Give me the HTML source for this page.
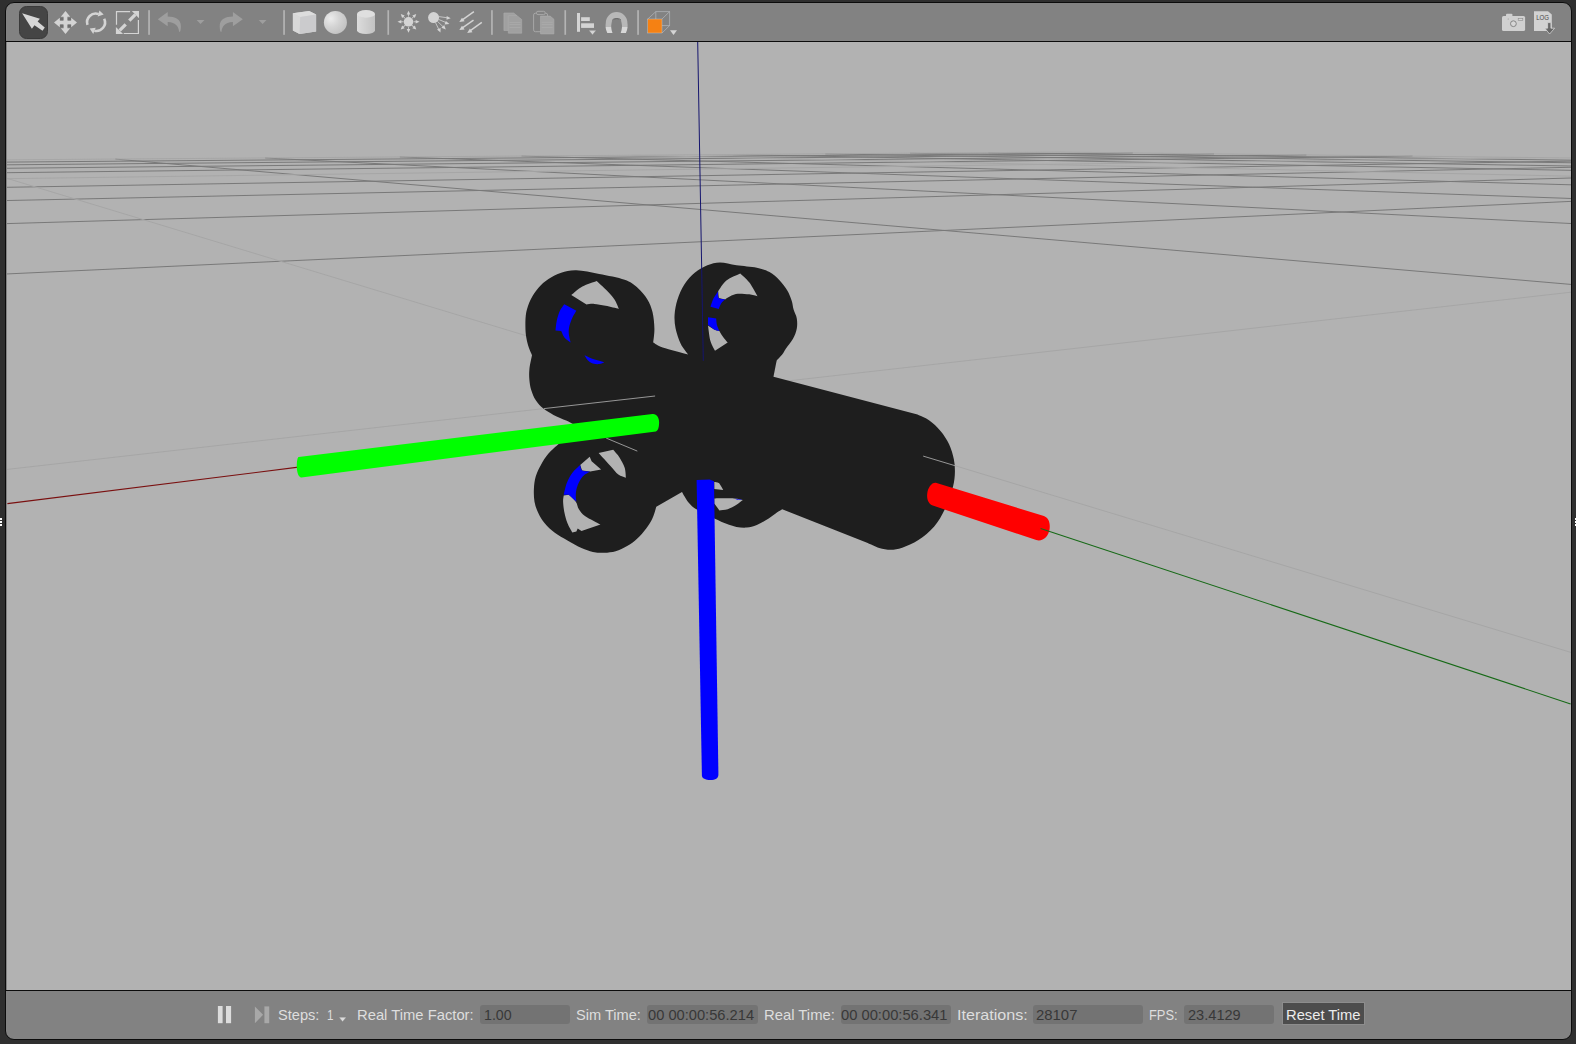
<!DOCTYPE html>
<html lang="en">
<head>
<meta charset="utf-8">
<title>Gazebo</title>
<style>
html,body{margin:0;padding:0;}
body{width:1576px;height:1044px;background:#2f2f2f;position:relative;overflow:hidden;font-family:"Liberation Sans",sans-serif;}
#win{position:absolute;left:5px;top:2px;width:1565px;height:1036px;border:1px solid #0c0c0c;border-radius:9px;background:#828282;overflow:hidden;}
#topline{position:absolute;left:6px;top:41px;width:1565px;height:1px;background:#0c0c0c;}
#botline{position:absolute;left:6px;top:990px;width:1565px;height:1px;background:#0c0c0c;}
#tb{position:absolute;left:0;top:0;}
.lbl{position:absolute;top:1006px;height:18px;line-height:18px;font-size:15px;color:#dedede;white-space:nowrap;}
.fld{position:absolute;top:1005px;height:19px;border-radius:3px;background:#737373;}
.fld span{position:absolute;left:4px;top:1px;line-height:18px;font-size:15px;color:#383838;white-space:nowrap;}
#reset{position:absolute;left:1282.4px;top:1002.2px;width:80.7px;height:20.6px;border:1.9px solid #8d8d8d;background:#4d4d4d;}
#reset span{position:absolute;left:2.7px;top:2.4px;line-height:18px;font-size:15px;color:#ececec;white-space:nowrap;}
.grip{position:absolute;width:2.1px;height:2px;background:#fff;}
/*FIT*/
#l1{transform:scaleX(0.9740);transform-origin:0 0;}
#l2{transform:scaleX(0.7800);transform-origin:0 0;}
#l3{transform:scaleX(0.9855);transform-origin:0 0;}
#l4{transform:scaleX(0.9730);transform-origin:0 0;}
#l5{transform:scaleX(0.9886);transform-origin:0 0;}
#l6{transform:scaleX(1.0730);transform-origin:0 0;}
#l7{transform:scaleX(0.8590);transform-origin:0 0;}
#f1{transform:scaleX(0.9460);transform-origin:0 0;}
#f2{transform:scaleX(0.9780);transform-origin:0 0;}
#f3{transform:scaleX(0.9820);transform-origin:0 0;}
#f4{transform:scaleX(0.9930);transform-origin:0 0;}
#f5{transform:scaleX(0.9720);transform-origin:0 0;}
#rt{transform:scaleX(0.9820);transform-origin:0 0;}
/*ENDFIT*/
</style>
</head>
<body>
<div id="win"></div>

<svg id="scene" width="1564" height="948" viewBox="6.6 42 1564 948" style="position:absolute;left:6.6px;top:42px;background:#b2b2b2">
<g stroke="#797979" stroke-width="1" opacity="1" fill="none"><line x1="1132.4" y1="153.0" x2="-2997.3" y2="186.4"/><line x1="1213.6" y1="153.9" x2="-2999.2" y2="192.0"/><line x1="1306.0" y1="155.0" x2="-2991.7" y2="198.9"/><line x1="1412.1" y1="156.2" x2="-2993.2" y2="207.9"/><line x1="1679.8" y1="159.3" x2="-2998.2" y2="237.6"/><line x1="1852.0" y1="161.3" x2="-2982.4" y2="264.1"/><line x1="2060.4" y1="163.7" x2="-2982.8" y2="310.8"/><line x1="2317.9" y1="166.7" x2="-2983.5" y2="412.7"/><line x1="3071.3" y1="175.4" x2="4984.1" y2="665.0"/><line x1="3654.0" y1="182.1" x2="4999.1" y2="263.0"/><line x1="4496.6" y1="191.9" x2="4997.1" y2="208.9"/><line x1="988.0" y1="152.7" x2="4991.2" y2="203.9"/><line x1="909.7" y1="153.3" x2="4996.8" y2="211.8"/><line x1="824.9" y1="153.9" x2="4986.2" y2="221.5"/><line x1="732.5" y1="154.6" x2="4992.8" y2="234.6"/><line x1="521.1" y1="156.1" x2="4985.1" y2="278.2"/><line x1="399.4" y1="157.0" x2="4997.2" y2="319.8"/><line x1="264.7" y1="158.0" x2="4964.8" y2="393.8"/><line x1="114.9" y1="159.1" x2="4979.4" y2="577.9"/><line x1="-241.9" y1="161.7" x2="-2996.7" y2="710.7"/><line x1="-456.5" y1="163.3" x2="-2990.7" y2="353.3"/><line x1="-702.3" y1="165.1" x2="-2989.3" y2="270.7"/><line x1="-986.7" y1="167.2" x2="-2988.7" y2="234.0"/><line x1="-1713.8" y1="172.5" x2="-2995.5" y2="200.0"/><line x1="-2189.1" y1="176.0" x2="-2994.2" y2="190.7"/><line x1="-2772.8" y1="180.3" x2="-2998.7" y2="183.9"/></g>
<g stroke="#a6a6a6" stroke-width="1" opacity="1" fill="none"><line x1="1060.5" y1="152.1" x2="-2995.9" y2="181.9"/><line x1="1535.3" y1="157.6" x2="-2995.3" y2="220.1"/><line x1="2644.3" y1="170.5" x2="-2986.3" y2="808.6"/><line x1="1060.5" y1="152.1" x2="4999.3" y2="197.7"/><line x1="631.7" y1="155.3" x2="4977.5" y2="252.1"/><line x1="-52.9" y1="160.3" x2="4749.6" y2="1616.1"/><line x1="-1319.3" y1="169.6" x2="-2997.3" y2="213.5"/></g>
<line x1="7" y1="503.6" x2="300" y2="466.9" stroke="#7a1010" stroke-width="1.1"/>
<path d="M531.6 355.3C531.1 354.0 529.4 350.6 528.4 347.6C527.4 344.6 526.5 341.1 525.9 337.5C525.3 333.9 525.0 330.2 525.0 326.0C525.0 321.8 525.0 316.5 525.9 312.1C526.8 307.7 528.3 303.4 530.3 299.4C532.3 295.4 534.9 291.4 537.9 288.0C540.9 284.6 544.3 281.6 548.1 279.1C551.9 276.6 556.1 274.3 560.8 272.8C565.4 271.3 569.7 270.0 576.0 270.2C582.3 270.4 590.8 272.4 598.8 274.0C606.8 275.6 617.9 277.5 624.2 279.7C630.6 281.9 633.1 284.1 636.9 287.4C640.7 290.7 644.5 295.3 647.0 299.4C649.5 303.5 650.9 307.2 652.1 312.1C653.3 317.0 653.9 323.5 654.0 328.6C654.1 333.7 653.0 340.3 652.8 342.6L652.8 342.6C654.4 343.4 656.5 345.6 662.3 347.6C668.1 349.6 683.5 353.4 687.8 354.6L687.8 354.6C686.5 352.8 682.4 348.1 680.3 343.8C678.2 339.5 676.2 333.5 675.2 328.6C674.2 323.7 673.9 319.5 674.2 314.6C674.5 309.7 675.5 304.5 677.1 299.4C678.8 294.3 681.2 288.6 684.1 284.2C687.0 279.8 690.5 276.0 694.3 272.8C698.1 269.6 702.8 266.9 707.0 265.2C711.2 263.5 714.8 262.4 719.6 262.4C724.5 262.4 730.0 264.3 736.1 265.2C742.2 266.1 750.9 266.5 756.4 267.7C761.9 268.9 765.3 270.0 769.1 272.1C772.9 274.2 776.3 277.3 779.3 280.4C782.3 283.5 784.9 287.1 786.9 290.5C788.9 293.9 790.2 297.5 791.3 300.7C792.3 303.9 792.4 306.6 793.2 309.6C794.1 312.6 795.9 315.3 796.4 318.5C796.9 321.7 797.0 325.2 796.4 328.6C795.8 332.0 794.4 335.5 792.6 338.8C790.8 342.1 787.2 346.1 785.4 348.7C783.6 351.3 783.3 352.6 781.8 354.5C780.3 356.4 777.3 359.2 776.4 360.2L776.4 360.2C776.1 361.4 775.4 364.8 774.9 367.5C774.4 370.2 773.4 375.2 773.1 376.7L773.1 376.7L917.1 414.6L917.1 414.6C919.0 415.6 924.8 417.6 928.6 420.3C932.4 423.0 936.8 426.9 940.1 430.9C943.5 434.9 946.5 439.5 948.7 444.3C950.9 449.1 952.5 454.5 953.5 459.6C954.5 464.7 954.7 469.8 954.4 474.9C954.1 480.0 953.3 484.6 951.6 490.3C949.9 496.1 947.3 503.4 944.3 509.4C941.3 515.4 938.2 521.4 933.8 526.5C929.4 531.6 923.3 536.6 918.0 540.1C912.7 543.6 906.4 546.1 901.8 547.7C897.2 549.3 894.1 549.7 890.3 549.7C886.5 549.7 882.6 549.0 878.8 547.9C875.0 546.8 869.2 543.8 867.3 543.0L867.3 543.0L781.8 509.2L781.8 509.2C781.0 509.7 779.1 510.7 776.8 512.3C774.5 513.9 771.3 516.6 767.9 518.7C764.5 520.8 760.0 523.5 756.4 525.0C752.8 526.5 749.7 527.3 746.3 527.6C742.9 527.9 739.5 527.5 736.1 526.9C732.7 526.3 729.6 525.2 726.0 523.8C722.4 522.4 719.5 521.0 714.6 518.7C709.7 516.4 701.2 512.6 696.8 509.8C692.3 507.1 690.4 505.2 687.9 502.2C685.4 499.2 682.6 493.7 681.6 492.0L681.6 492.0L655.9 506.8L655.9 506.8C655.3 508.7 653.8 514.6 652.1 518.2C650.4 521.8 648.3 525.0 645.8 528.4C643.3 531.8 640.1 535.5 636.9 538.5C633.7 541.5 630.3 544.0 626.7 546.1C623.1 548.2 619.1 550.1 615.3 551.2C611.5 552.3 607.7 552.6 603.9 552.7C600.1 552.8 596.3 552.7 592.5 551.9C588.7 551.1 585.3 549.9 581.1 548.0C576.9 546.1 571.6 542.9 567.1 540.4C562.6 537.9 558.2 535.6 554.4 532.8C550.6 529.9 547.0 526.6 544.3 523.3C541.5 520.0 539.6 516.7 537.9 513.1C536.2 509.5 534.8 505.7 534.1 501.7C533.4 497.7 533.3 493.2 533.5 489.0C533.7 484.8 534.2 480.3 535.4 476.3C536.6 472.3 538.4 468.8 540.5 465.0C542.6 461.2 545.1 457.1 548.1 453.6C551.1 450.1 556.5 445.7 558.2 444.1L572.2 423.8C571.1 423.3 569.0 422.1 565.8 420.6C562.6 419.1 556.9 416.9 553.1 414.9C549.3 412.9 546.0 411.0 543.0 408.6C540.0 406.2 537.4 403.4 535.4 400.3C533.4 397.2 532.0 393.6 530.9 390.2C529.8 386.8 529.3 383.5 529.0 380.0C528.7 376.5 528.6 373.3 529.0 369.2C529.4 365.1 531.2 357.6 531.6 355.3Z" fill="#1e1e1e"/>
<path d="M570.9 295.0C572.8 293.6 577.8 288.8 582.0 286.5C586.2 284.2 593.9 281.9 596.3 281.0L596.3 281.0C598.0 282.6 603.4 287.4 606.4 290.5C609.4 293.6 612.1 296.3 614.1 299.4C616.1 302.5 617.8 307.3 618.5 308.9L618.5 308.9C616.3 308.4 609.3 306.6 605.2 305.8C601.1 305.0 597.0 304.1 593.8 303.9C590.6 303.7 587.4 304.4 586.1 304.5ZM717.7 291.2C719.1 289.4 722.3 283.4 726.0 280.4C729.7 277.4 737.6 274.6 739.9 273.4L739.9 273.4C741.4 274.9 745.9 278.5 748.8 282.3C751.7 286.1 755.7 293.9 757.1 296.2L757.1 296.2C755.7 295.9 752.1 294.7 748.8 294.3C745.5 293.9 740.3 293.5 737.4 293.7C734.5 293.9 733.2 294.7 731.1 295.6C729.0 296.6 725.8 298.8 724.7 299.4L718.4 298.1ZM707.6 325.4C708.5 326.0 711.4 328.2 713.3 329.2C715.2 330.1 718.0 330.8 719.0 331.1L719.0 331.1C719.5 332.0 720.8 334.3 722.2 336.2C723.6 338.1 726.4 341.5 727.3 342.6L714.6 350.8C713.9 349.2 711.3 345.5 710.1 341.3C708.9 337.1 708.0 328.0 707.6 325.4ZM598.2 453.0L612.8 449.8L612.8 449.8C613.8 451.1 617.2 454.4 619.1 457.4C621.0 460.4 623.1 464.2 624.2 467.6C625.3 471.0 625.3 476.0 625.5 477.7L625.5 477.7C624.2 477.2 620.4 476.4 617.9 474.5C615.4 472.6 613.6 469.9 610.3 466.3C607.0 462.7 600.2 455.2 598.2 453.0ZM579.8 465.0L589.3 456.8L591.2 461.2L600.7 469.5L589.9 471.4L581.7 470.4ZM563.3 495.4L568.4 494.7L568.4 494.7C569.6 495.9 573.7 499.3 575.4 501.7C577.1 504.1 576.9 506.9 578.5 509.3C580.1 511.7 581.3 513.8 584.9 516.3C588.5 518.8 597.6 523.2 600.1 524.6L581.1 530.9L577.3 528.6L576.0 531.5L571.9 532.4L571.9 532.4C571.1 530.9 568.4 526.7 567.1 523.3C565.8 519.9 564.6 515.5 563.9 511.9C563.2 508.3 562.8 504.4 562.7 501.7C562.6 498.9 563.2 496.4 563.3 495.4ZM713.9 481.9C714.6 482.1 716.9 481.8 718.4 483.1C719.9 484.4 722.1 488.8 722.8 489.9L713.9 488.9ZM713.9 498.4C717.2 498.4 728.8 498.1 733.6 498.4C738.4 498.7 741.0 499.7 742.5 500.0L742.5 500.0C741.4 500.8 738.6 503.2 736.1 504.7C733.6 506.2 730.1 508.2 727.3 509.2C724.4 510.1 720.4 510.2 719.0 510.4L719.0 510.4L713.9 503.5Z" fill="#b2b2b2"/>
<path d="M563.9 304.2L576.0 310.8L576.0 310.8C575.4 311.9 573.4 314.6 572.2 317.2C571.0 319.8 569.6 323.4 569.0 326.1C568.4 328.9 568.2 330.9 568.4 333.7C568.6 336.4 570.0 341.1 570.3 342.6L570.3 342.6C569.3 341.8 565.8 339.6 564.2 337.7C562.6 335.8 561.4 332.2 560.8 331.1L555.1 330.5C555.3 328.9 555.6 324.3 556.3 321.0C557.0 317.7 558.2 313.6 559.5 310.8C560.8 308.0 563.2 305.3 563.9 304.2ZM584.2 355.3C585.4 355.8 587.9 357.2 591.2 358.4C594.5 359.5 601.8 361.6 603.9 362.2L603.9 362.2C603.0 362.5 600.7 363.9 598.8 364.1C596.9 364.3 594.4 364.1 592.5 363.5C590.6 362.9 588.8 361.7 587.4 360.3C586.0 358.9 584.7 356.1 584.2 355.3ZM717.7 291.2C717.8 292.4 717.2 296.7 718.4 298.1C719.6 299.5 723.7 299.2 724.7 299.4L724.7 299.4C724.1 300.0 722.0 301.6 720.9 303.2C719.8 304.8 718.8 307.9 718.4 308.9L710.1 306.8C710.6 305.4 712.0 300.7 713.3 298.1C714.6 295.5 717.0 292.4 717.7 291.2ZM707.6 317.2L715.8 318.5L715.8 318.5C715.9 319.6 716.0 322.7 716.5 324.8C717.0 326.9 718.6 330.1 719.0 331.1L719.0 331.1C718.0 330.8 715.2 330.2 713.3 329.2C711.4 328.1 708.5 325.5 707.6 324.8ZM579.8 465.0C580.1 465.9 580.0 469.3 581.7 470.4C583.4 471.5 588.5 471.2 589.9 471.4L589.9 471.4C588.6 472.2 584.4 474.1 582.3 476.4C580.2 478.7 578.4 482.3 577.3 485.3C576.1 488.3 575.6 491.4 575.4 494.2C575.2 496.9 575.9 500.5 576.0 501.8L576.0 501.8L568.4 494.8L563.3 494.8C563.8 492.8 565.0 486.5 566.5 482.8C568.0 479.1 570.0 475.6 572.2 472.6C574.4 469.6 578.5 466.3 579.8 465.0ZM733.6 498.4C735.1 498.7 741.9 499.8 742.5 500.0C743.1 500.2 737.9 499.8 737.0 499.8Z" fill="#0000ff"/>
<g stroke="#a4a4a4" stroke-width="0.9" fill="none">
<line x1="543.6" y1="408.6" x2="654.7" y2="396.0"/>
<line x1="605.8" y1="438.1" x2="636.9" y2="451.1"/>
<line x1="922.8" y1="456.1" x2="954.6" y2="465.7"/>
</g>
<line x1="697.3" y1="41.6" x2="702.9" y2="360.8" stroke="#15156e" stroke-width="1"/>
<!-- green cylinder -->
<path d="M298.2 457 L652.1 414 C656.5 413.6 659 418 658.7 423.3 C658.5 428 657.5 431 655.5 431.4 L301 477.4 C298.5 477.6 296.6 473 296.4 467.5 C296.3 462 297 457.3 298.2 457Z" fill="#00ff00"/>
<!-- red cylinder -->
<path d="M936.2 483 L1043.5 516.1 C1048 517.8 1050 522.5 1049.2 529 C1048.2 536.5 1042.5 541.8 1035.9 540.1 L932.4 505.6 C928.5 504.3 926.2 500 926.8 494 C927.4 487 932 481.7 936.2 483Z" fill="#ff0000"/>
<line x1="1040.2" y1="528.4" x2="1570.2" y2="703.9" stroke="#176a17" stroke-width="1.1"/>
<!-- blue cylinder -->
<path d="M696.2 480 L709.3 479.6 L713.6 481.2 L718 774.5 C718 778.3 715 780 710 780 C705 780 701.6 778.3 701.5 775.5Z" fill="#0000ff"/>
</svg>

<div id="topline"></div>
<div id="botline"></div>
<div class="grip" style="left:0;top:518px"></div><div class="grip" style="left:0;top:521px"></div><div class="grip" style="left:0;top:524px"></div>
<div class="grip" style="left:1574.6px;top:518px"></div><div class="grip" style="left:1574.6px;top:521px"></div><div class="grip" style="left:1574.6px;top:524px"></div>
<svg id="tb" width="1576" height="44" viewBox="0 0 1576 44" style="position:absolute;left:0;top:0">
<defs>
<radialGradient id="sph" cx="0.3" cy="0.33" r="0.75"><stop offset="0" stop-color="#ececec"/><stop offset="0.5" stop-color="#d4d4d4"/><stop offset="1" stop-color="#c2c2c2"/></radialGradient>
<linearGradient id="cyl" x1="0" x2="1"><stop offset="0" stop-color="#dcdcdc"/><stop offset="1" stop-color="#c2c2c2"/></linearGradient>
</defs>
<!-- select button -->
<rect x="19.5" y="6.5" width="28" height="32" rx="7" fill="#454545" stroke="#3a3a3a" stroke-width="1"/>
<path d="M22.1 13.2L39.9 18.7L37.6 21.6L44.8 27.6L42.5 30.7L34.5 25.3L31.9 28.7Z" fill="#d6d6d6"/>
<!-- move -->
<path d="M65.5 11L70.2 16.8H67.4V20.6H71.2V17.8L77 22.5L71.2 27.2V24.4H67.4V28.2H70.2L65.5 34L60.8 28.2H63.6V24.4H59.8V27.2L54 22.5L59.8 17.8V20.6H63.6V16.8H60.8Z" fill="#d4d4d4"/>
<g fill="#707070"><rect x="60.2" y="17.8" width="3" height="2.6"/><rect x="67.8" y="17.8" width="3" height="2.6"/><rect x="60.2" y="24.6" width="3" height="2.6"/><rect x="67.8" y="24.6" width="3" height="2.6"/></g>
<!-- rotate -->
<g fill="none" stroke="#d4d4d4" stroke-width="2.6">
<path d="M87.5 24.8A8.6 8.6 0 0 1 98.6 14.1"/>
<path d="M104.2 18.7A8.6 8.6 0 0 1 94.4 30.7"/>
</g>
<path d="M99.4 10.4L103.7 14.5L97.7 16.5Z M95.7 27.7L89.7 28.5L93.2 33.9Z" fill="#d4d4d4"/>
<!-- scale -->
<g fill="none" stroke="#d4d4d4" stroke-width="1.2">
<path d="M130.1 11.6H116.5V24.8"/><path d="M138.4 20V33.5H123.7"/>
</g>
<g stroke="#d4d4d4" stroke-width="3.3"><line x1="129.3" y1="20.7" x2="135.3" y2="14.7"/><line x1="119.7" y1="30.3" x2="125.7" y2="24.3"/></g>
<path d="M139 11H131.8L139 18.2Z M115.9 33.9V26.9L123.1 33.9Z" fill="#d4d4d4"/>
<!-- separators -->
<g fill="#b4b4b4">
<rect x="148.2" y="10.2" width="1.7" height="24.6"/>
<rect x="283.2" y="10.2" width="1.7" height="24.6"/>
<rect x="387.4" y="10.2" width="1.7" height="24.6"/>
<rect x="491.1" y="10.2" width="1.7" height="24.6"/>
<rect x="564.4" y="10.2" width="1.7" height="24.6"/>
<rect x="637.2" y="10.2" width="1.7" height="24.6"/>
</g>
<!-- undo / redo -->
<g fill="#9e9e9e">
<path id="undo" d="M157.8 19.2L167.7 12V16.6C175 16.6 181 19.5 180.9 26C180.9 28.5 180.6 30.5 180 31.8L179 31.8C179 27 176 22.3 167.7 21.9V26.3Z"/>
<path d="M242.8 19.2L232.9 12V16.6C225.6 16.6 219.6 19.5 219.7 26C219.7 28.5 220 30.5 220.6 31.8L221.6 31.8C221.6 27 224.6 22.3 232.9 21.9V26.3Z"/>
<path d="M196.6 19.9H204.5L200.5 24.1Z"/>
<path d="M258.7 19.9H266.5L262.6 24.1Z"/>
</g>
<!-- cube -->
<path d="M292.9 13.2L309.1 11L316.1 14.5V31.6L299.6 34.1L292.9 30.4Z" fill="#d6d6d6"/>
<path d="M292.9 13.2L309.1 11L316.1 14.5L300.2 17.1Z" fill="#dddddd"/>
<path d="M292.9 13.2L300.2 17.1L299.6 34.1L292.9 30.4Z" fill="#d8d8d8"/>
<path d="M300.2 17.1L316.1 14.5V31.6L299.6 34.1Z" fill="#cbcbcd"/>
<!-- sphere -->
<circle cx="335.4" cy="22.4" r="11.5" fill="url(#sph)"/>
<!-- cylinder -->
<path d="M357 13.9V30.3A9 3.7 0 0 0 375 30.3V13.9Z" fill="url(#cyl)"/>
<ellipse cx="366" cy="13.9" rx="9" ry="3.8" fill="#dfdfdf"/>
<!-- point light -->
<g fill="#d4d4d4" stroke="none">
<circle cx="408.5" cy="21.8" r="4.8"/>
<g><rect x="408.1" y="13.5" width="0.8" height="3.2"/><path d="M408.5 10.8L410.3 14.6H406.7Z"/></g>
<g transform="rotate(45 408.5 21.8)"><rect x="408.1" y="13.5" width="0.8" height="3.2"/><path d="M408.5 10.8L410.3 14.6H406.7Z"/></g><g transform="rotate(90 408.5 21.8)"><rect x="408.1" y="13.5" width="0.8" height="3.2"/><path d="M408.5 10.8L410.3 14.6H406.7Z"/></g><g transform="rotate(135 408.5 21.8)"><rect x="408.1" y="13.5" width="0.8" height="3.2"/><path d="M408.5 10.8L410.3 14.6H406.7Z"/></g>
<g transform="rotate(180 408.5 21.8)"><rect x="408.1" y="13.5" width="0.8" height="3.2"/><path d="M408.5 10.8L410.3 14.6H406.7Z"/></g><g transform="rotate(225 408.5 21.8)"><rect x="408.1" y="13.5" width="0.8" height="3.2"/><path d="M408.5 10.8L410.3 14.6H406.7Z"/></g><g transform="rotate(270 408.5 21.8)"><rect x="408.1" y="13.5" width="0.8" height="3.2"/><path d="M408.5 10.8L410.3 14.6H406.7Z"/></g><g transform="rotate(315 408.5 21.8)"><rect x="408.1" y="13.5" width="0.8" height="3.2"/><path d="M408.5 10.8L410.3 14.6H406.7Z"/></g>
</g>
<!-- spot light -->
<circle cx="433.6" cy="17.6" r="5.5" fill="#d4d4d4"/>
<g stroke="#d4d4d4" stroke-width="0.8" fill="none">
<line x1="439" y1="16.6" x2="448" y2="17.9"/><line x1="438.8" y1="19.5" x2="447" y2="23"/><line x1="437.6" y1="21.5" x2="444" y2="27.6"/><line x1="435.6" y1="22.8" x2="439.5" y2="30.8"/>
</g>
<g fill="#d4d4d4">
<path d="M450.7 18.2L446.7 15.9L446.5 19.7Z"/><path d="M449.4 24L445.9 20.9L444.6 24.4Z"/><path d="M445.8 29.4L444.2 25L441.4 27.7Z"/><path d="M440.5 32.6L440.6 28L437 29.6Z"/>
</g>
<!-- directional light -->
<g stroke="#d4d4d4" stroke-width="1.5" fill="none">
<line x1="473.9" y1="11.7" x2="462" y2="20.1"/><line x1="473.5" y1="20.2" x2="462" y2="28.2"/><line x1="481.8" y1="22.4" x2="470" y2="30.9"/>
</g>
<g fill="#d4d4d4">
<path d="M459.3 22L462 17.7L464.6 21.3Z"/><path d="M459.3 30.1L462 25.8L464.6 29.4Z"/><path d="M467.2 32.9L469.9 28.6L472.5 32.2Z"/>
</g>
<!-- copy -->
<g fill="#a0a0a0" stroke="#adadad" stroke-width="0.6">
<path d="M503.9 13H513.7L517 15.7H508.3V30.5H503.9Z"/>
<path d="M508.3 15.7H517L521.7 19.5V33.2H508.3Z"/>
</g>
<g stroke="#b0b0b0" stroke-width="0.5"><line x1="509.5" y1="22.5" x2="520.5" y2="22.5"/><line x1="509.5" y1="24.5" x2="520.5" y2="24.5"/><line x1="509.5" y1="27.5" x2="520.5" y2="27.5"/></g>
<!-- paste -->
<rect x="533.6" y="13.2" width="14" height="18.5" rx="1.8" fill="none" stroke="#ababab" stroke-width="0.9"/>
<rect x="536.5" y="11.3" width="8.6" height="3.3" rx="1.4" fill="#828282" stroke="#ababab" stroke-width="0.9"/>
<path d="M540.5 16.1H550.1L553.9 19.2V33.9H540.5Z" fill="#a2a2a2" stroke="#adadad" stroke-width="0.6"/>
<g stroke="#b0b0b0" stroke-width="0.5"><line x1="541.7" y1="22.3" x2="552.7" y2="22.3"/><line x1="541.7" y1="24.5" x2="552.7" y2="24.5"/><line x1="541.7" y1="27.5" x2="552.7" y2="27.5"/></g>
<!-- align -->
<g fill="#d4d4d4">
<rect x="577" y="13" width="3" height="18.8"/><rect x="581.1" y="17.2" width="8.7" height="3.8"/><rect x="581.1" y="23.3" width="12.9" height="4.6"/>
<path d="M588.8 30.3H596.2L592.5 35Z" stroke="#828282" stroke-width="0.5"/>
</g>
<!-- magnet -->
<linearGradient id="mag" x1="0" y1="12" x2="0" y2="33" gradientUnits="userSpaceOnUse"><stop offset="0.695" stop-color="#b8b8b8"/><stop offset="0.696" stop-color="#d8d8d8"/></linearGradient>
<path d="M607.3 33C605.3 29 605.4 25.5 605.8 23A10.8 11 0 0 1 627.4 23C627.8 25.5 627.9 29 625.9 33L620.7 33C622.1 29 622.3 26 621.7 23.5A5.1 5.3 0 0 0 611.5 23.5C610.9 26 611.1 29 612.5 33Z" fill="url(#mag)"/>
<path d="M612.2 20.3A4.6 2.3 0 0 1 621.1 20.3" fill="none" stroke="#5c5c5c" stroke-width="0.9"/>
<!-- orange cube -->
<g fill="none" stroke="#bcc0c4" stroke-width="0.6">
<path d="M647.8 19L655.8 11.6H669.6V25.6L662 33"/><path d="M669.6 11.6L662 19"/><path d="M655.8 11.6V19M655.8 25.6H669.6M655.8 25.6L652 29"/>
</g>
<rect x="647.8" y="19" width="14.2" height="14" fill="#f58113" stroke="#c8ccd0" stroke-width="0.4"/>
<path d="M670 30.3H677L673.5 35Z" fill="#d4d4d4"/>
<!-- camera -->
<rect x="1502" y="15.9" width="23.1" height="15.2" rx="1.6" fill="#d0d0d0"/>
<path d="M1506 16V14.6Q1506 13.7 1507 13.7H1511.4Q1512.4 13.7 1512.4 14.6V16Z" fill="#d0d0d0"/>
<circle cx="1513.4" cy="23.7" r="2.9" fill="#d6d6d6" stroke="#858585" stroke-width="1"/>
<rect x="1518.2" y="18.5" width="4.6" height="1.8" fill="#d6d6d6" stroke="#8c8c8c" stroke-width="0.6"/>
<circle cx="1508.2" cy="19" r="0.5" fill="#8a8a8a"/>
<!-- log -->
<path d="M1534 11.2H1548L1551.8 14.6V31.1H1534Z" fill="#d2d2d2"/>
<text x="1536.2" y="20" font-family="'Liberation Sans',sans-serif" font-size="7" fill="#4a4a4a" textLength="12.8" lengthAdjust="spacingAndGlyphs">LOG</text>
<path d="M1547.6 22.6H1550.9V28.2H1554.6L1549.6 34L1544.8 28.2H1547.6Z" fill="#686868" stroke="#dcdcdc" stroke-width="0.7"/>
</svg>

<svg width="70" height="24" viewBox="210 1002 70 24" style="position:absolute;left:210px;top:1002px">
<rect x="217.9" y="1006" width="4.7" height="17.2" fill="#dcdcdc"/><rect x="226" y="1006" width="5.1" height="17.2" fill="#dcdcdc"/>
<path d="M254.9 1006.4L263.1 1014.8L254.9 1023.2Z" fill="#a8a8a8"/><rect x="264.4" y="1006.4" width="4.8" height="16.8" fill="#a8a8a8"/>
</svg>
<div class="lbl" id="l1" style="left:278px">Steps:</div>
<div class="lbl" id="l2" style="left:327px">1</div>
<svg width="10" height="8" viewBox="338 1016 10 8" style="position:absolute;left:338px;top:1016px"><path d="M339 1017.2H346.2L342.6 1021.8Z" fill="#dcdcdc" stroke="#828282" stroke-width="0.4"/></svg>
<div class="lbl" id="l3" style="left:356.5px">Real Time Factor:</div>
<div class="fld" style="left:480px;width:90px"><span id="f1">1.00</span></div>
<div class="lbl" id="l4" style="left:576px">Sim Time:</div>
<div class="fld" style="left:647px;width:111px"><span id="f2" style="left:1px">00 00:00:56.214</span></div>
<div class="lbl" id="l5" style="left:763.5px">Real Time:</div>
<div class="fld" style="left:840.5px;width:110.5px"><span id="f3" style="left:0.3px">00 00:00:56.341</span></div>
<div class="lbl" id="l6" style="left:956.5px">Iterations:</div>
<div class="fld" style="left:1033px;width:109.5px"><span id="f4" style="left:3px">28107</span></div>
<div class="lbl" id="l7" style="left:1148.5px">FPS:</div>
<div class="fld" style="left:1184px;width:89.5px"><span id="f5">23.4129</span></div>
<div id="reset"><span id="rt">Reset Time</span></div>

</body>
</html>
